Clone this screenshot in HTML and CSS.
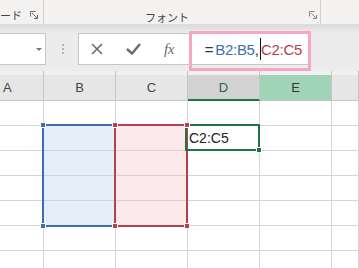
FILE: index.html
```html
<!DOCTYPE html>
<html lang="ja">

<head>
    <meta charset="UTF-8">
    <meta name="viewport" content="width=device-width, initial-scale=1.0">
    <title>Excel 参照範囲</title>
    <link rel="stylesheet" href="styles.css">
</head>

<body>
    <div class="ribbon">
        <div class="group group-clip">
            <span class="group-label">ード</span>
            <svg class="launcher" width="8" height="8" viewBox="0 0 8 8">
                <path d="M0.5 5.5 V0.5 H5.5 M2 2 L7.2 7.2 M7.5 4 V7.5 H4" fill="none" stroke="#6a6a6a" stroke-width="1" />
            </svg>
        </div>
        <div class="group group-font">
            <span class="group-label">フォント</span>
            <svg class="launcher" width="8" height="8" viewBox="0 0 8 8">
                <path d="M0.5 5.5 V0.5 H5.5 M2 2 L7.2 7.2 M7.5 4 V7.5 H4" fill="none" stroke="#8a8a8a" stroke-width="1" />
            </svg>
        </div>
    </div>

    <div class="formula-bar">
        <div class="name-box">
            <span class="arrow"></span>
        </div>
        <div class="grip">
            <span></span><span></span><span></span>
        </div>
        <div class="formula-box">
            <svg class="icon-cancel" width="12" height="12" viewBox="0 0 12 12">
                <path d="M1 1 L11 11 M11 1 L1 11" stroke="#6b6b6b" stroke-width="1.6" />
            </svg>
            <svg class="icon-enter" width="15" height="12" viewBox="0 0 15 12">
                <path d="M1 6 L6 10.5 L14 1" fill="none" stroke="#6b6b6b" stroke-width="2.4" />
            </svg>
            <span class="fx">fx</span>
            <span class="formula"><span class="eq">=</span><span class="ref-b">B2:B5</span>,<span class="caret"></span><span class="ref-c">C2:C5</span></span>
        </div>
        <!-- highlight around the formula text -->
        <div class="mark"></div>
    </div>

    <div class="sheet">
        <div class="grid">
            <div class="head col-a">A</div>
            <div class="head">B</div>
            <div class="head">C</div>
            <div class="head head-active">D</div>
            <div class="head head-green">E</div>
            <div class="head"></div>

            <div class="cell"></div><div class="cell"></div><div class="cell"></div><div class="cell"></div><div class="cell"></div><div class="cell"></div>
            <div class="cell"></div><div class="cell"></div><div class="cell"></div><div class="cell text">C2:C5</div><div class="cell"></div><div class="cell"></div>
            <div class="cell"></div><div class="cell"></div><div class="cell"></div><div class="cell"></div><div class="cell"></div><div class="cell"></div>
            <div class="cell"></div><div class="cell"></div><div class="cell"></div><div class="cell"></div><div class="cell"></div><div class="cell"></div>
            <div class="cell"></div><div class="cell"></div><div class="cell"></div><div class="cell"></div><div class="cell"></div><div class="cell"></div>
            <div class="cell"></div><div class="cell"></div><div class="cell"></div><div class="cell"></div><div class="cell"></div><div class="cell"></div>
            <div class="cell"></div><div class="cell"></div><div class="cell"></div><div class="cell"></div><div class="cell"></div><div class="cell"></div>
        </div>

        <!-- range highlights -->
        <div class="range range-b">
            <span class="handle tl"></span><span class="handle tr"></span>
            <span class="handle bl"></span><span class="handle br"></span>
        </div>
        <div class="active-cell">
            <span class="handle br"></span>
        </div>
        <div class="range range-c">
            <span class="handle tl"></span><span class="handle tr"></span>
            <span class="handle bl"></span><span class="handle br"></span>
        </div>
    </div>
</body>

</html>
```

FILE: styles.css
```css
body {
    margin: 0;
    width: 359px;
    height: 268px;
    overflow: hidden;
    background-color: #fff;
    font-family: 'Liberation Sans', Arial, sans-serif;
    color: #333;
}

/* ribbon */
.ribbon {
    display: flex;
    height: 24px;
    background-color: #f3f2f1;
    border-bottom: 1px solid #dcdcdc;
}

.group {
    display: flex;
    align-items: center;
    height: 24px;
    border-right: 1px solid #d2d0ce;
    box-sizing: border-box;
    padding-top: 6px;
}

.group-label {
    font-family: 'Noto Sans CJK JP', sans-serif;
    font-size: 11px;
    color: #444;
    line-height: 1;
}

.group-clip {
    width: 44px;
    padding-right: 5px;
}

.group-clip .group-label {
    flex: 1;
    margin-top: 0;
}

.group-font {
    width: 277px;
    justify-content: flex-end;
    padding-right: 3px;
}

.group-font .group-label {
    margin-right: 120px;
    margin-top: 5px;
}

.launcher {
    display: block;
    margin-top: 0;
}

/* formula bar */
.formula-bar {
    position: relative;
    display: flex;
    align-items: center;
    height: 46px;
    padding-top: 2px;
    box-sizing: border-box;
    background: linear-gradient(#dadada, #ececec 8px);
}

.name-box {
    position: relative;
    width: 47px;
    height: 32px;
    margin-left: -1px;
    background-color: #fff;
    border: 1px solid #c6c6c6;
    box-sizing: border-box;
}

.arrow {
    position: absolute;
    left: 36px;
    top: 14px;
    border-left: 3px solid transparent;
    border-right: 3px solid transparent;
    border-top: 3px solid #777;
}

.grip {
    display: flex;
    flex-direction: column;
    gap: 2px;
    margin-left: 16px;
    width: 16px;
}

.grip span {
    width: 2px;
    height: 2px;
    background-color: #b4b4b4;
}

.formula-box {
    display: flex;
    align-items: center;
    width: 232px;
    height: 32px;
    background-color: #fff;
    border: 1px solid #c6c6c6;
    box-sizing: border-box;
}

.icon-cancel {
    margin-left: 12px;
}

.icon-enter {
    margin-left: 23px;
}

.fx {
    margin-left: 23px;
    font-family: 'Liberation Serif', serif;
    font-style: italic;
    font-size: 15px;
    color: #6b6b6b;
    letter-spacing: -0.5px;
}

.formula {
    display: flex;
    align-items: center;
    margin-left: 31px;
    font-size: 15px;
    letter-spacing: -0.3px;
    color: #333;
}

.eq {
    margin-right: 2px;
}

.ref-b {
    color: #3e6db0;
}

.ref-c {
    color: #b2424b;
}

.caret {
    width: 1px;
    height: 22px;
    margin: 0 0.5px 0 1px;
    background-color: #111;
}

.mark {
    position: absolute;
    left: 189px;
    top: 6px;
    width: 122px;
    height: 40px;
    border: 3px solid #f4a7c5;
    box-sizing: border-box;
}

/* sheet */
.sheet {
    position: relative;
}

.grid {
    display: grid;
    grid-template-columns: 44px 72px 72px 72px 72px 1fr;
    grid-template-rows: 30px repeat(7, 25px);
}

.head {
    display: flex;
    align-items: center;
    justify-content: center;
    padding-top: 4px;
    font-size: 13px;
    color: #444;
    background: linear-gradient(#f0f0f0 4px, #e6e6e6 4px);
    border-right: 1px solid #c6c6c6;
    border-bottom: 1px solid #c6c6c6;
    box-sizing: border-box;
}

.col-a {
    justify-content: flex-start;
    padding-left: 3px;
}

.head-active {
    color: #2f5d43;
    background: linear-gradient(#f0f0f0 4px, #d3d3d3 4px);
    border-bottom: 2px solid #217346;
}

.head-green {
    color: #333;
    background: linear-gradient(#f0f0f0 4px, #9fd5b6 4px);
}

.cell {
    border-right: 1px solid #d4d4d4;
    border-bottom: 1px solid #d4d4d4;
    box-sizing: border-box;
}

.text {
    display: flex;
    align-items: center;
    padding-left: 1px;
    font-size: 14px;
    color: #222;
}

.range {
    position: absolute;
    top: 53px;
    width: 74px;
    height: 103px;
    border: 2px solid;
    box-sizing: border-box;
}

.range-b {
    left: 42px;
    border-color: #3e6db0;
    background-color: rgba(200, 218, 245, 0.45);
}

.range-b .handle {
    background-color: #3e6db0;
}

.range-c {
    left: 114px;
    border-color: #b2424b;
    background-color: rgba(245, 200, 205, 0.4);
}

.range-c .handle {
    background-color: #b2424b;
}

.active-cell {
    position: absolute;
    z-index: 2;
    left: 185px;
    top: 53px;
    width: 75px;
    height: 27px;
    border: 2px solid #217346;
    box-sizing: border-box;
}

.active-cell .handle {
    background-color: #217346;
}

.handle {
    position: absolute;
    z-index: 3;
    width: 4px;
    height: 4px;
    border: 1px solid #fff;
}

.tl { left: -4px; top: -4px; }
.tr { right: -4px; top: -4px; }
.bl { left: -4px; bottom: -4px; }
.br { right: -4px; bottom: -4px; }
```
